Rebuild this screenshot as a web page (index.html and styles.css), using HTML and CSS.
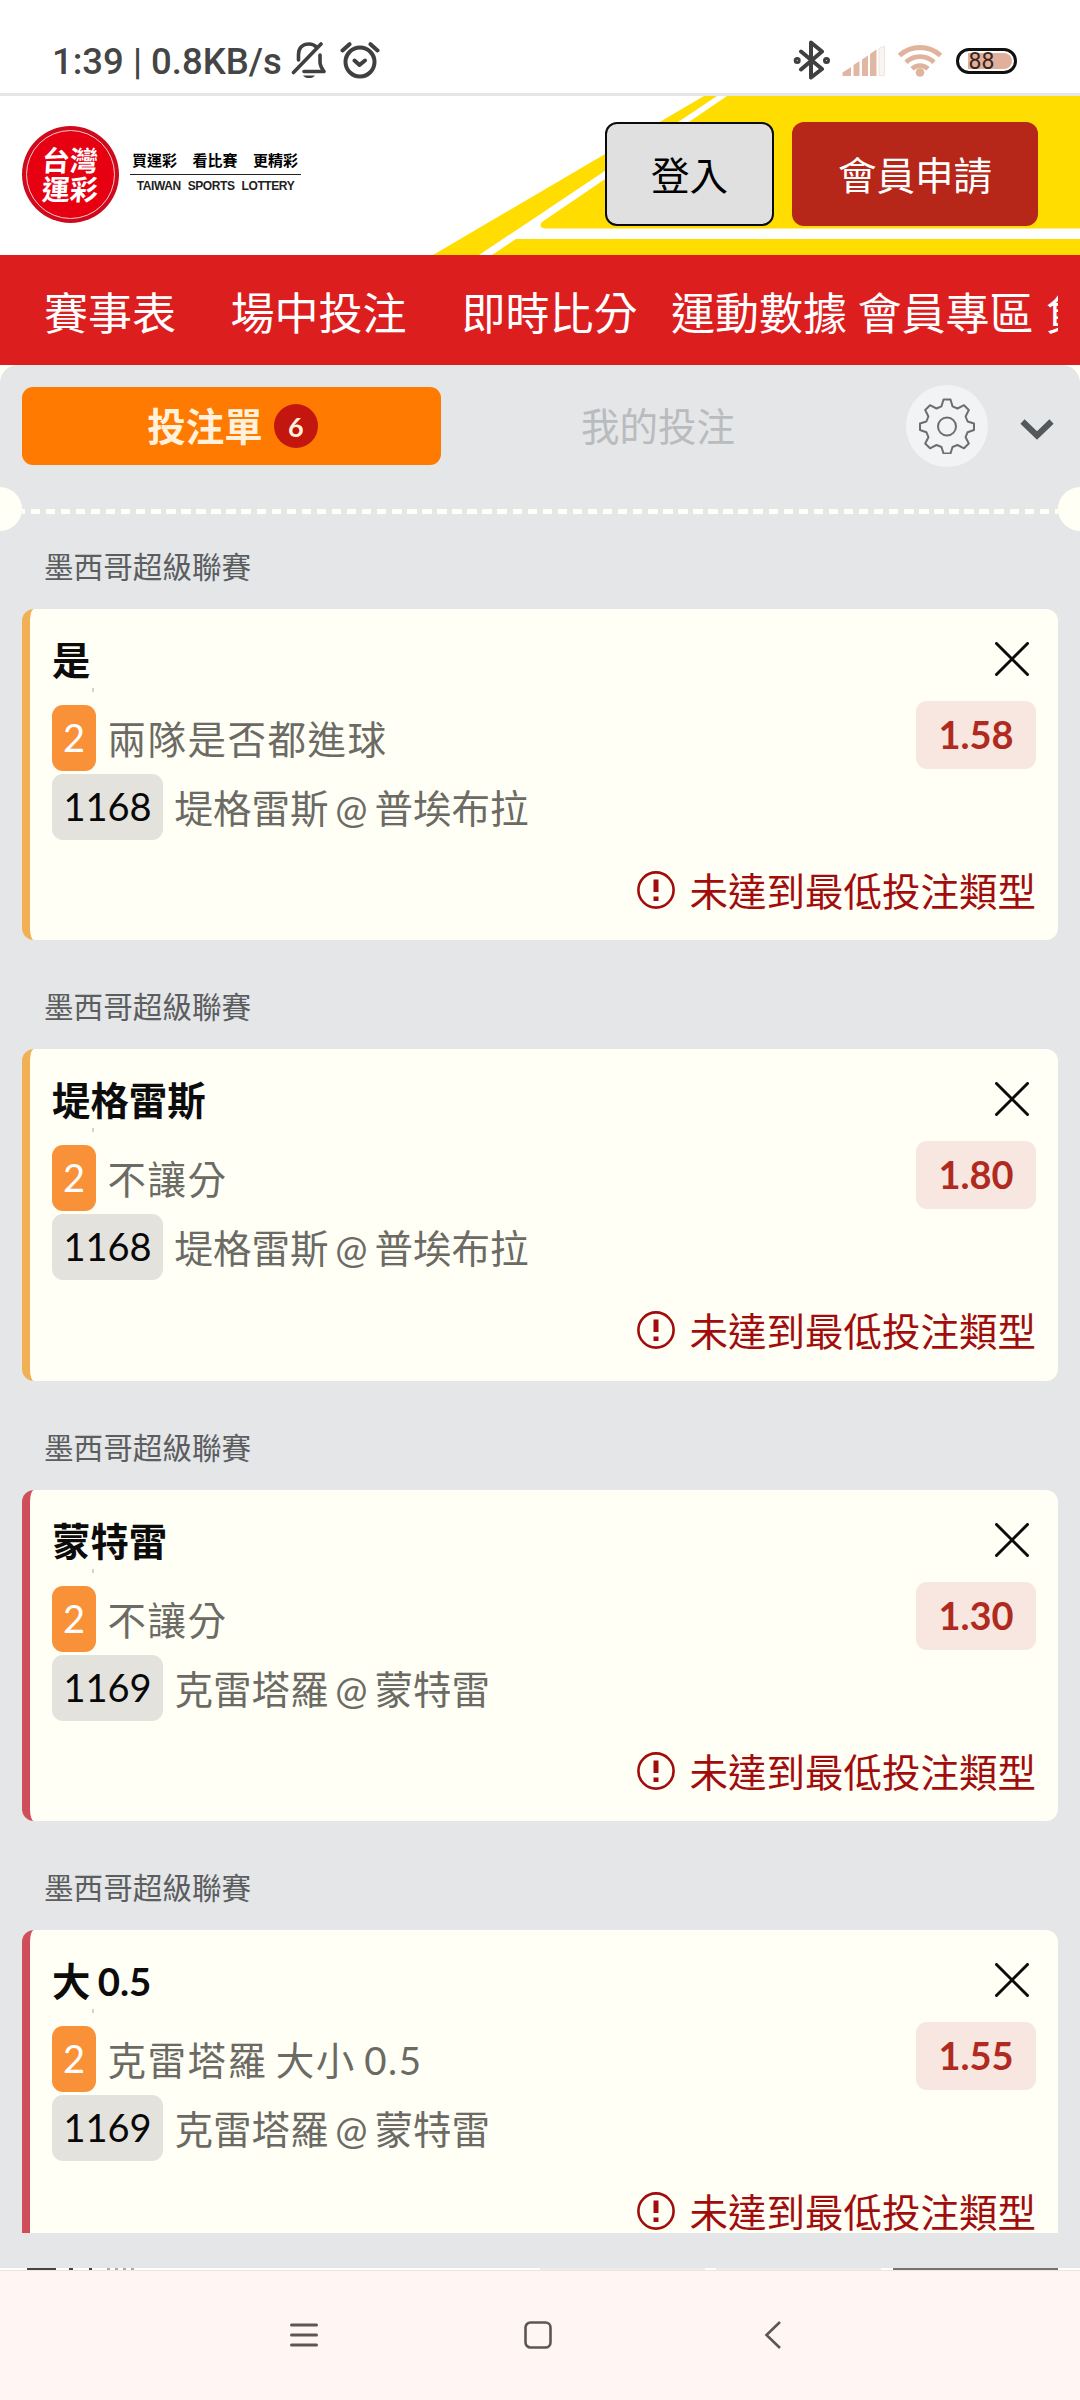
FILE: index.html
```html
<!DOCTYPE html>
<html lang="zh-Hant">
<head>
<meta charset="utf-8">
<title>台灣運彩</title>
<link rel="stylesheet" href="styles.css">
</head>
<body>
<svg class="defs" width="0" height="0">
  <symbol id="close" viewBox="0 0 34 34"><path d="M1.5 1.5 32.5 32.5M32.5 1.5 1.5 32.5" fill="none" stroke="#0c0c0c" stroke-width="3" stroke-linecap="round"/></symbol>
  <symbol id="alert" viewBox="0 0 38 38"><circle cx="19" cy="19" r="17.6" fill="none" stroke="#a10d0d" stroke-width="2.6"/><path d="M16.5 8.500h5v12.500h-5zM16.500 25.500h5v4.500h-5z" fill="#a10d0d"/></symbol>
</svg>

<div class="status">
  <span class="status-text">1:39 | 0.8KB/s</span>
  <svg class="bell" width="36" height="40" viewBox="0 0 36 40" fill="none" stroke="#404040" stroke-width="3.600" stroke-linecap="round" stroke-linejoin="round">
    <path d="M7.500 20V15C7.500 8 11.500 4 18 4c3 0 5.500 1 7.300 3M29 15v7c0 4 1.500 6 4 9.500H13M2.500 32.500 30 4"/>
    <path d="M12 35.500h12c-2 3.400-10 3.400-12 0z" fill="#404040" stroke="none"/>
  </svg>
  <svg class="alarm" width="40" height="38" viewBox="0 0 40 38" fill="none" stroke="#404040" stroke-width="4" stroke-linecap="round" stroke-linejoin="round">
    <circle cx="20" cy="21" r="14.500"/><path d="M14.500 19.500 19.500 24l5.500-4.500M2.500 9.500 9.500 3.200M37.500 9.500l-7-6.300"/>
  </svg>
  <span class="grow"></span>
  <svg class="bt" width="38" height="40" viewBox="0 0 38 40" fill="none" stroke="#404040" stroke-width="4" stroke-linejoin="round" stroke-linecap="round">
    <path d="M8 11.500 29 29 18 37.500V2.500L29 11.500 8 29.500"/><circle cx="4.200" cy="20.500" r="2" stroke-width="3"/><circle cx="33.500" cy="20.500" r="2" stroke-width="3"/>
  </svg>
  <svg class="signal" width="44" height="32" viewBox="0 0 44 32" fill="#dfb7a3">
    <path d="M.5 27.500 9 22v9H.5zM11.500 20l6-4v15h-6zM20 14.500l6-4V31h-6zM28 9l6.500-4.500V31H28z"/><path d="M37 3.500 42.500 1v29.500H37z" fill="#faf4f2" stroke="#f0e4df"/>
  </svg>
  <svg class="wifi" width="44" height="34" viewBox="0 0 44 34" fill="none" stroke="#dfb39c" stroke-width="4.800">
    <path d="M1.500 11.500C13 .800 31 .800 42.500 11.500M8 18.300c8-7.500 20-7.500 28 0M14 24.800c4.500-4.200 11.500-4.200 16 0"/><circle cx="22" cy="28.500" r="4.300" fill="#dfb39c" stroke="none"/>
  </svg>
  <div class="battery"><span>88</span></div>
</div>

<header class="header">
  <svg class="stripes" width="1080" height="159" viewBox="0 0 1080 159">
    <path d="M433 159 704 0H1080V159z" fill="#ffdd00"/>
    <path d="M479 159 717 0h10L542 126q-5 6.500 6 6.500H1080v10.500H516L492 159z" fill="#fff"/>
  </svg>
  <div class="brand">
    <div class="seal"><div class="seal-ring"><b>台灣</b><b>運彩</b></div></div>
    <div class="slogan">
      <div class="slogan-zh"><span>買運彩</span><span>看比賽</span><span>更精彩</span></div>
      <div class="slogan-en">TAIWAN SPORTS LOTTERY</div>
    </div>
  </div>
  <div class="actions"><button class="login">登入</button><button class="join">會員申請</button></div>
</header>

<nav class="menu"><div class="menu-track">
  <a class="m1">賽事表</a><a class="m2">場中投注</a><a class="m3">即時比分</a><a class="m4">運動數據</a><a class="m5">會員專區</a><a>負</a>
</div></nav>

<main class="page"><div class="slip">
  <div class="tabs">
    <div class="tab tab-on">投注單<span class="count">6</span></div>
    <div class="tab">我的投注</div>
    <div class="gear"><svg width="56" height="56" viewBox="0 0 56 56" fill="none" stroke="#6c6e70" stroke-width="2" stroke-linejoin="round">
      <path d="M24.500 1.500h7l2 6.800 5 2.200 6.500-3.300 4.800 4.800-3.200 6.500 2 5 6.400 2v6.500l-6.400 2.200-2 5 3.200 6.300-4.800 4.800-6.500-3.300-5 2-2 6.500h-7l-2-6.500-5-2-6.500 3.300-4.800-4.800 3.200-6.300-2-5L1 32v-6.500l6.400-2 2-5L6.200 12 11 7.200l6.500 3.300 5-2.200z"/><circle cx="28" cy="28.500" r="9"/></svg></div>
    <svg class="chev" width="34" height="22" viewBox="0 0 34 22"><path d="M2.500 2.500 17 16.500 31.500 2.500" fill="none" stroke="#54585a" stroke-width="6"/></svg>
  </div>
  <div class="perf"><i class="notch"></i><i class="dashes"></i><i class="notch"></i></div>

  <div class="list">
    <section class="bet amber">
      <h2>墨西哥超級聯賽</h2>
      <article>
        <div class="body">
          <div class="info"><h3>是</h3>
            <p class="row market"><b class="tag">2</b><span>兩隊是否都進球</span></p>
            <p class="row"><b class="tag code">1168</b><span>堤格雷斯 @ 普埃布拉</span></p></div>
          <div class="side"><svg class="x"><use href="#close"/></svg><strong class="odds">1.58</strong></div>
        </div>
        <div class="warn"><svg><use href="#alert"/></svg><span>未達到最低投注類型</span></div>
      </article>
    </section>
    <section class="bet amber">
      <h2>墨西哥超級聯賽</h2>
      <article>
        <div class="body">
          <div class="info"><h3>堤格雷斯</h3>
            <p class="row market"><b class="tag">2</b><span>不讓分</span></p>
            <p class="row"><b class="tag code">1168</b><span>堤格雷斯 @ 普埃布拉</span></p></div>
          <div class="side"><svg class="x"><use href="#close"/></svg><strong class="odds">1.80</strong></div>
        </div>
        <div class="warn"><svg><use href="#alert"/></svg><span>未達到最低投注類型</span></div>
      </article>
    </section>
    <section class="bet red">
      <h2>墨西哥超級聯賽</h2>
      <article>
        <div class="body">
          <div class="info"><h3>蒙特雷</h3>
            <p class="row market"><b class="tag">2</b><span>不讓分</span></p>
            <p class="row"><b class="tag code">1169</b><span>克雷塔羅 @ 蒙特雷</span></p></div>
          <div class="side"><svg class="x"><use href="#close"/></svg><strong class="odds">1.30</strong></div>
        </div>
        <div class="warn"><svg><use href="#alert"/></svg><span>未達到最低投注類型</span></div>
      </article>
    </section>
    <section class="bet red">
      <h2>墨西哥超級聯賽</h2>
      <article>
        <div class="body">
          <div class="info"><h3>大 0.5</h3>
            <p class="row market"><b class="tag">2</b><span>克雷塔羅 大小 0.5</span></p>
            <p class="row"><b class="tag code">1169</b><span>克雷塔羅 @ 蒙特雷</span></p></div>
          <div class="side"><svg class="x"><use href="#close"/></svg><strong class="odds">1.55</strong></div>
        </div>
        <div class="warn"><svg><use href="#alert"/></svg><span>未達到最低投注類型</span></div>
      </article>
    </section>
  </div>
</div></main>

<svg class="peek" width="1080" height="2" viewBox="0 0 1080 2">
  <path d="M27 0h29v2H27zM69 0h4v2h-4zM89 0h3v2h-3z" fill="#444"/>
  <path d="M107 0h3v2h-3zM115 0h3v2h-3zM123 0h3v2h-3zM131 0h3v2h-3z" fill="#aaa"/>
  <path d="M540 0h165v2H540zM716 0h165v2H716z" fill="#ececec"/><path d="M893 0h165v2H893z" fill="#757370"/>
</svg>
<footer class="sysnav">
  <svg width="28" height="28" viewBox="0 0 28 28"><path d="M1.500 4h25M1.500 14h25M1.500 24h25" stroke="#5c5654" stroke-width="3" stroke-linecap="round"/></svg>
  <svg width="28" height="28" viewBox="0 0 28 28"><rect x="1.500" y="1.500" width="25" height="25" rx="5" fill="none" stroke="#5c5654" stroke-width="2.600"/></svg>
  <svg width="28" height="28" viewBox="0 0 28 28"><path d="M22 1 8.500 14 22 27" fill="none" stroke="#5c5654" stroke-width="2.600"/></svg>
</footer>
</body>
</html>
```
FILE: styles.css
```css
* { box-sizing: border-box; margin: 0; padding: 0; }
html, body { width: 1080px; height: 2400px; overflow: hidden; }
body { display: flex; flex-direction: column; background: #fff; font-family: Lato, "Noto Sans CJK TC", sans-serif; font-weight: 400; }
svg { display: block; flex: none; }
.defs { position: absolute; }
.grow { flex: 1; }

.status { height: 96px; flex: none; display: flex; align-items: flex-start; padding: 0 63px 0 52px; border-bottom: 3px solid #e6e6e6; }
.status-text { font: 500 36.500px/42px Roboto, sans-serif; color: #454545; padding-top: 41px; width: 239px; white-space: nowrap; }
.bell { margin-top: 40px; }
.alarm { margin: 41px 0 0 13px; }
.bt { margin: 40px 11px 0 0; }
.signal { margin: 45px 12px 0 0; }
.wifi { margin: 44px 14px 0 0; }
.battery { width: 61px; height: 26px; margin-top: 48px; padding: 2px; border: 3px solid #111; border-radius: 13px; background: linear-gradient(90deg, #fff 7px, #e0b09b 7px) content-box; background-clip: content-box; overflow: hidden; }
.battery span { display: block; width: 37px; margin-left: 2px; text-align: center; font: 400 23px/17px Roboto, sans-serif; color: #3a2420; }

.header { height: 159px; flex: none; position: relative; display: flex; justify-content: space-between; padding: 26px 42px 0 22px; }
.stripes { position: absolute; left: 0; top: 0; }
.brand { position: relative; display: flex; gap: 11px; padding-top: 4px; }
.seal { width: 97px; height: 97px; border-radius: 50%; background: #cf0a1c; padding: 4px; }
.seal-ring { width: 89px; height: 89px; border: 1.500px solid #f7c9cc; border-radius: 50%; background: #e60012; color: #fff; display: flex; flex-direction: column; align-items: center; padding-top: 14px; }
.seal b { font: 700 28px/29px "Noto Sans CJK TC", sans-serif; transform: skewX(-4deg); }
.slogan { width: 171px; padding-top: 24px; }
.slogan-zh { display: flex; justify-content: space-between; padding: 0 3px 5px 2px; border-bottom: 1.500px solid #222; font: 700 15px/19px "Noto Sans CJK TC", sans-serif; color: #000; }
.slogan-en { font: 700 12px/22px "Liberation Sans", sans-serif; letter-spacing: -0.400px; word-spacing: 4px; color: #222; text-align: center; white-space: nowrap; }
.actions { position: relative; display: flex; gap: 18px; height: 104px; }
.actions button { border-radius: 12px; font: 400 38.500px/1 "Noto Sans CJK TC", sans-serif; padding-bottom: 2px; }
.login { width: 169px; border: 2px solid #0b0b0b; background: #e0e0e0; color: #000; }
.join { width: 246px; border: 0; background: #b62619; color: #fff; }

.menu { height: 110px; flex: none; background: #dd1e1f; padding: 0 22px; }
.menu-track { display: flex; overflow: hidden; height: 110px; padding-left: 22px; font: 400 44px/112px "Noto Sans CJK TC", sans-serif; color: #fff; white-space: nowrap; }
.menu a { flex: none; }
.m1 { margin-right: 54.500px; }
.m2 { margin-right: 55px; }
.m3 { margin-right: 33.500px; }
.m4 { margin-right: 10.500px; }
.m5 { margin-right: 12px; }

.page { flex: none; height: 1903px; background: #fffff5; }
.slip { height: 1903px; background: #e4e6e8; border-radius: 18px 18px 0 0; padding-top: 20px; }
.tabs { height: 102px; display: flex; align-items: flex-start; padding-left: 22px; }
.tab { width: 434px; height: 78px; margin-top: 2px; display: flex; align-items: center; justify-content: center; font-size: 38.500px; line-height: 1; color: #b9bbbd; }
.tab-on { width: 419px; border-radius: 11px; background: #ff7a00; color: #fff1dc; font-weight: 700; gap: 11px; padding-left: 2px; }
.count { width: 44px; height: 44px; border-radius: 50%; background: #c3160f; text-align: center; font-size: 27px; line-height: 46px; }
.gear { width: 82px; height: 82px; margin-left: 31px; border-radius: 50%; background: #f1f3f5; display: flex; align-items: center; justify-content: center; }
.chev { margin: 34px 0 0 32px; }
.perf { height: 44px; display: flex; align-items: center; overflow: hidden; }
.notch { width: 44px; height: 44px; flex: none; border-radius: 50%; background: #fffff5; margin: 0 -22px; position: relative; }
.dashes { flex: 1; height: 5px; margin: 4px 22px 0; background: repeating-linear-gradient(90deg, #fffff5 0 3px, transparent 3px 8.600px, #fffff5 8.600px 15.060px); }

.list { height: 1702px; overflow: hidden; padding: 0 22px; display: flex; flex-direction: column; gap: 31.030px; }
.bet { flex: none; }
.bet h2 { font-size: 29.600px; font-weight: 400; line-height: 72px; height: 78px; padding-left: 22px; color: #5b5d5f; }
article { height: 331.300px; border-radius: 12px; border-left: 8px solid #f0b053; background: #fffff5; padding: 30px 22px 0; }
.red article { border-color: #d04e5a; }
.body { display: flex; justify-content: space-between; }
.info { flex: 1; }
h3 { font-size: 38.400px; line-height: 42px; height: 66px; color: #0c0c0c; position: relative; word-spacing: -2px; }
h3::after { content: ""; position: absolute; left: 40px; top: 49px; width: 2px; height: 4px; background: #d5d5cd; }
.row { display: flex; align-items: center; height: 66px; margin-bottom: 3px; font-size: 38.500px; color: #6b6a64; gap: 11.500px; white-space: nowrap; word-spacing: -3px; }
.row span { padding-bottom: 2px; }
.market { letter-spacing: 1.500px; }
.tag { width: 44px; height: 66px; border-radius: 11px; background: #f99138; color: #fff; font-weight: 400; font-size: 38px; line-height: 65px; letter-spacing: 0; text-align: center; }
.code { width: 111px; background: #e4e2dd; color: #080808; }
.side { display: flex; flex-direction: column; align-items: flex-end; }
.x { width: 34px; height: 34px; margin: 3px 7px 25px 0; }
.odds { width: 120px; height: 68px; border-radius: 11px; background: #f7e7e0; color: #b02a20; font-size: 38px; line-height: 67px; text-align: center; }
.warn { margin-top: 26px; height: 44px; display: flex; justify-content: flex-end; align-items: center; gap: 14px; font-size: 38.500px; line-height: 44px; color: #a10d0d; }
.warn svg { width: 38px; height: 38px; margin-top: -2px; }

.peek { background: #fff; }
.sysnav { flex: 1; border-top: 1px solid #ece4e0; background: #fff6f4; display: flex; gap: 206px; padding: 50px 0 0 290px; }
```
